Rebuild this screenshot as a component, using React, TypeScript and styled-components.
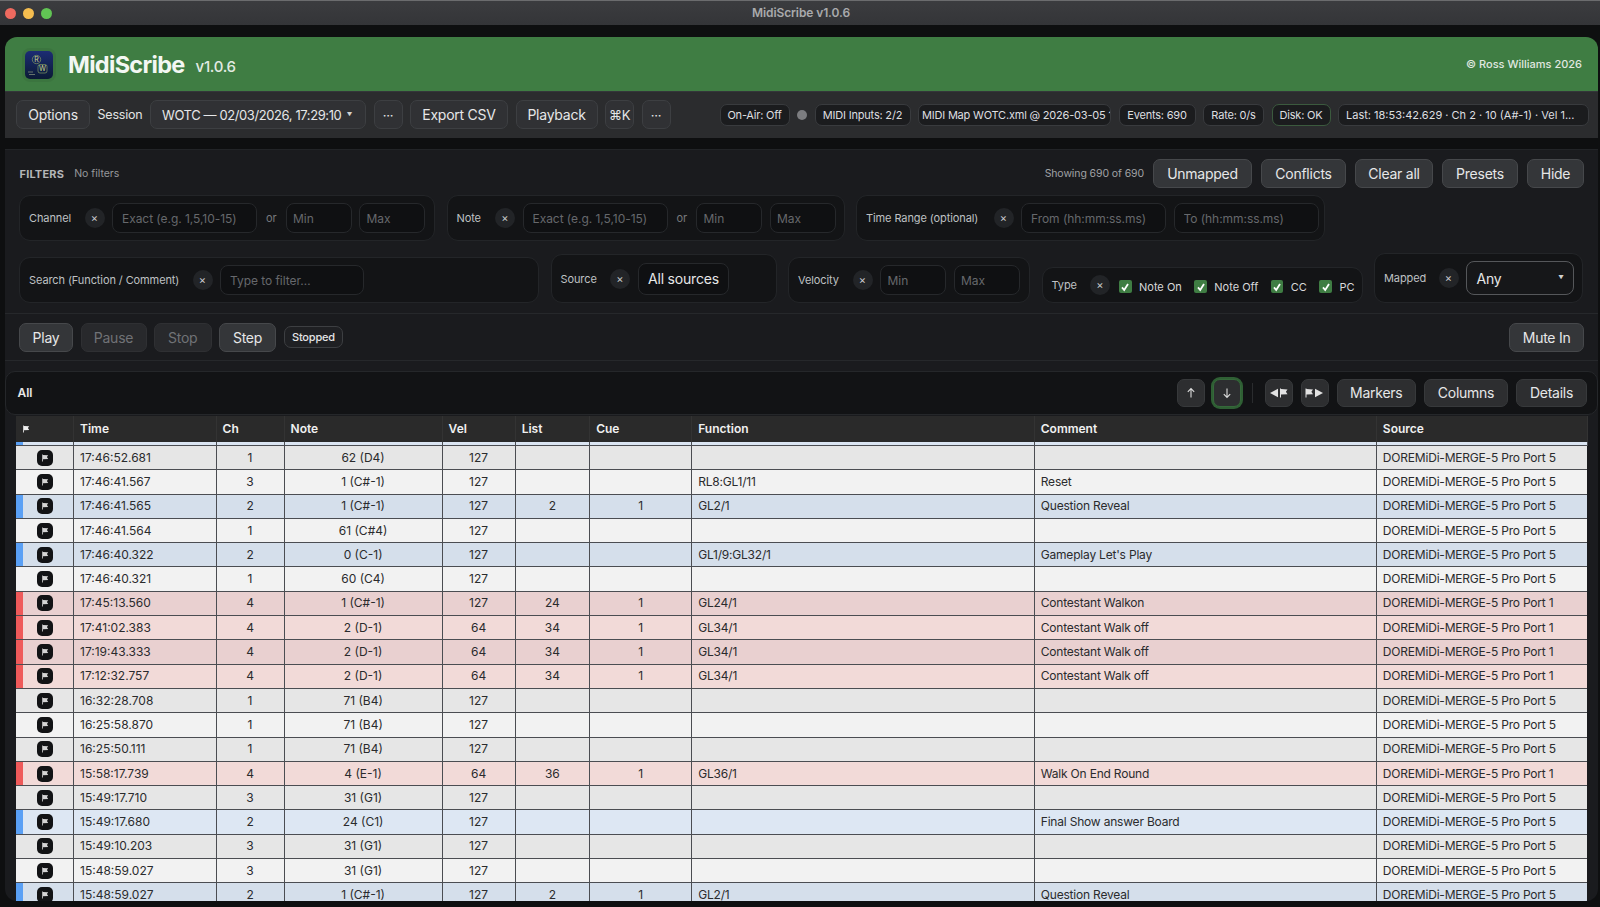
import styled, { createGlobalStyle } from 'styled-components'

const GlobalStyle = createGlobalStyle`
  html, body {
    margin: 0;
    height: 100%;
    background: #0e0f10;
    overflow: hidden;
    font-family: Inter, "Liberation Sans", sans-serif;
  }
  * { box-sizing: border-box; }
`

const Page = styled.div`
  width: 1600px;
  height: 907px;
  display: flex;
  flex-direction: column;
  overflow: hidden;
`

const TitleBar = styled.header`
  height: 25px;
  flex: none;
  display: grid;
  grid-template-columns: 1fr auto 1fr;
  align-items: center;
  padding: 0 5px;
  background: linear-gradient(#3b3c3f, #343538);
  border-top: 1px solid #6b6c6e;
`

const Lights = styled.div`
  display: flex;
  gap: 7px;
`

const Light = styled.span<{ $color: string }>`
  width: 11px;
  height: 11px;
  border-radius: 50%;
  background: ${({ $color }) => $color};
`

const WindowTitle = styled.div`
  padding: 0 0 2px 2px;
  font-size: 12px;
  font-weight: 600;
  color: #a9aaac;
  letter-spacing: -0.1px;
`

const Shell = styled.div`
  flex: 1;
  min-height: 0;
  margin: 12px 2px 6px 4.5px;
  display: flex;
  flex-direction: column;
  border-radius: 12px;
  overflow: hidden;
`

const Brand = styled.div`
  height: 54px;
  flex: none;
  display: flex;
  align-items: center;
  padding: 0 16px 0 17.5px;
  background: #3f7d43;
`

const LogoPlate = styled.div`
  width: 34px;
  height: 34px;
  margin-right: 12px;
  padding: 3px;
  margin-top: 2px;
  border-radius: 8px;
  background: rgba(0, 0, 0, 0.06);
`

const AppName = styled.h1`
  margin: 0;
  font-size: 23.5px;
  font-weight: 700;
  letter-spacing: -0.7px;
  color: #f3f7f3;
`

const Version = styled.span`
  margin-left: 11px;
  margin-top: 4px;
  font-size: 15px;
  font-weight: 500;
  letter-spacing: -0.3px;
  color: #e3ebe3;
`

const Copyright = styled.span`
  margin-left: auto;
  font-size: 11px;
  font-weight: 500;
  color: #e0e8e0;
`

const Toolbar = styled.div`
  height: 47px;
  flex: none;
  display: flex;
  align-items: center;
  padding: 0 9.5px 0 11.5px;
  background: #2b2c2e;
  box-shadow: inset 0 1px 0 #34363a;
`

const Button = styled.button<{ $tone?: 'bar' | 'off'; $width?: number }>`
  flex: none;
  height: 29px;
  ${({ $width }) => ($width ? `width: ${$width}px;` : '')}
  padding: 0 ${({ $width }) => ($width ? 0 : 12.5)}px;
  border-radius: 7px;
  font-family: inherit;
  font-size: 14px;
  letter-spacing: -0.25px;
  color: ${({ $tone }) => ($tone === 'off' ? '#707276' : '#e6e7e8')};
  background: ${({ $tone }) =>
    $tone === 'bar' ? '#303134' : $tone === 'off' ? '#28292c' : '#343639'};
  border: 1px solid
    ${({ $tone }) => ($tone === 'bar' ? '#3d3f42' : $tone === 'off' ? '#2f3033' : '#46484b')};
`

const ToolGroup = styled.div`
  display: flex;
  align-items: center;
  gap: 7.5px;
`

const SessionLabel = styled.span`
  font-size: 12.5px;
  letter-spacing: -0.2px;
  color: #e2e3e4;
`

const SessionSelect = styled(Button)`
  width: 216px;
  padding: 0 13px 0 11px;
  display: flex;
  align-items: center;
  justify-content: space-between;
  font-size: 13px;
  letter-spacing: -0.4px;
`

const Caret = styled.span`
  font-size: 5.5px;
  color: #d0d0d0;
`

const SquareButton = styled(Button)`
  width: 29px;
  padding: 0;
  font-size: 13px;
`

const StatusGroup = styled.div`
  margin-left: auto;
  display: flex;
  align-items: center;
  gap: 7.5px;
`

const Pill = styled.span<{ $width: number; $ok?: boolean }>`
  flex: none;
  width: ${({ $width }) => $width}px;
  height: 22px;
  padding: 0 7px;
  display: inline-flex;
  align-items: center;
  justify-content: center;
  overflow: hidden;
  white-space: nowrap;
  font-size: 11px;
  letter-spacing: -0.2px;
  color: #dedfe0;
  background: #1b1c1e;
  border: 1px solid ${({ $ok }) => ($ok ? '#3b5a3e' : '#393b3e')};
  border-radius: 7px;
`

const ClipPill = styled(Pill)`
  justify-content: flex-start;
  padding: 0 3px;
`

const LastPill = styled(Pill)`
  justify-content: flex-start;
  letter-spacing: 0;
`

const Dot = styled.span`
  width: 10px;
  height: 10px;
  border-radius: 50%;
  background: #7c7d80;
`

const Content = styled.div`
  flex: 1;
  min-height: 0;
  margin-top: 11px;
  display: flex;
  flex-direction: column;
  background: #1a1b1e;
  border-top: 1px solid #222427;
`

const Filters = styled.section`
  flex: none;
  padding: 9px 14px 10px 14.5px;
  display: flex;
  flex-direction: column;
  gap: 7px;
  border-bottom: 1px solid #26282b;
`

const FilterHead = styled.div`
  height: 29px;
  display: flex;
  align-items: center;
  gap: 9px;
`

const FilterTitle = styled.strong`
  padding-left: 0.5px;
  font-size: 11px;
  font-weight: 700;
  letter-spacing: 0.2px;
  color: #b4b6b8;
`

const FilterNote = styled.span`
  margin-left: 1px;
  font-size: 10.5px;
  color: #96989b;
`

const Showing = styled.span`
  margin-left: auto;
  font-size: 10.5px;
  letter-spacing: -0.1px;
  color: #a0a2a5;
`

const FilterStack = styled.div`
  display: flex;
  flex-direction: column;
  gap: 12px;
`

const FilterRow = styled.div`
  display: flex;
  align-items: flex-end;
  gap: 11.5px;
`

const Group = styled.div<{ $width: number; $height?: number }>`
  flex: none;
  width: ${({ $width }) => $width}px;
  height: ${({ $height }) => $height ?? 46}px;
  padding: 0 9px;
  display: flex;
  align-items: center;
  gap: 7.5px;
  background: #131416;
  border: 1px solid #232528;
  border-radius: 11px;
`

const GroupLabel = styled.span<{ $width: number }>`
  flex: none;
  width: ${({ $width }) => $width}px;
  white-space: nowrap;
  font-size: 11px;
  letter-spacing: -0.1px;
  color: #bfc1c3;
`

const ClearChip = styled.span`
  flex: none;
  width: 20px;
  height: 20px;
  display: flex;
  align-items: center;
  justify-content: center;
  border-radius: 50%;
  font-size: 11px;
  color: #c8c9cb;
  background: #222427;
`

const TextInput = styled.input<{ $width: number; $narrow?: boolean }>`
  flex: none;
  width: ${({ $width }) => $width}px;
  height: 30px;
  padding: 0 ${({ $narrow }) => ($narrow ? 6.5 : 9)}px;
  font-family: inherit;
  font-size: 12px;
  letter-spacing: -0.05px;
  color: #ddd;
  background: #0f1012;
  border: 1px solid #26282b;
  border-radius: 8px;
  outline: none;
  &::placeholder {
    color: #66686c;
  }
`

const OrLabel = styled.span`
  flex: none;
  width: 13.5px;
  text-align: center;
  font-size: 11px;
  color: #77797c;
`

const SelectBox = styled.div<{ $width: number; $height: number; $strong?: boolean }>`
  flex: none;
  width: ${({ $width }) => $width}px;
  height: ${({ $height }) => $height}px;
  padding: 0 9.5px;
  display: flex;
  align-items: center;
  justify-content: space-between;
  white-space: nowrap;
  font-size: 14px;
  letter-spacing: -0.2px;
  color: #e6e7e8;
  background: ${({ $strong }) => ($strong ? '#161719' : '#0f1012')};
  border: 1px solid ${({ $strong }) => ($strong ? '#55575a' : '#26282b')};
  border-radius: 8px;
`

const CheckList = styled.div`
  margin-left: 1.5px;
  margin-top: 3px;
  display: flex;
  gap: 12.5px;
`

const CheckItem = styled.label`
  display: inline-flex;
  align-items: center;
  gap: 7.5px;
  white-space: nowrap;
  font-size: 11px;
  color: #d8d9da;
`

const CheckBox = styled.span`
  width: 12.5px;
  height: 13px;
  display: flex;
  align-items: center;
  justify-content: center;
  border-radius: 2px;
  background: #3f7d43;
`

const Transport = styled.div`
  flex: none;
  height: 47px;
  padding: 0 14px 0 14.5px;
  display: flex;
  align-items: center;
  gap: 7.5px;
  border-bottom: 1px solid #26282b;
`

const StatePill = styled.span`
  height: 22px;
  padding: 0 7.5px;
  display: inline-flex;
  align-items: center;
  font-size: 11px;
  font-weight: 500;
  letter-spacing: -0.2px;
  color: #e4e5e6;
  background: #1f2023;
  border: 1px solid #3d3f42;
  border-radius: 7px;
`

const PushRight = styled(Button)`
  margin-left: auto;
`

const EventsPanel = styled.section`
  flex: 1;
  min-height: 0;
  margin-top: 9.5px;
  display: flex;
  flex-direction: column;
`

const EventsBar = styled.div`
  flex: none;
  height: 44px;
  padding: 0 10px 0 12px;
  display: flex;
  align-items: center;
  gap: 8px;
  background: #121315;
  border: 1px solid #25272a;
  border-radius: 10px;
`

const BarTitle = styled.strong`
  margin-right: auto;
  font-size: 12px;
  font-weight: 600;
  color: #e8e8e8;
`

const BarButton = styled(Button)`
  height: 28px;
  font-size: 14px;
  background: #2d2e30;
  border-color: #37393b;
`

const BarIcon = styled(BarButton)<{ $active?: boolean }>`
  width: 28px;
  padding: 0;
  display: flex;
  align-items: center;
  justify-content: center;
  ${({ $active }) => $active && 'border-color: #35693a; box-shadow: 0 0 0 2px #2f5f34;'}
`

const BarDivider = styled.span`
  width: 1px;
  height: 20px;
  margin: 0 3.5px;
  background: #2a2c2e;
`

const TableWrap = styled.div`
  flex: 1;
  min-height: 0;
  margin: 1px 10.5px 0 11.5px;
  overflow: hidden;
`

const EventTable = styled.table`
  width: 100%;
  table-layout: fixed;
  border-collapse: collapse;
  font-size: 12px;
  color: #2a2b2d;
`

const HeadCell = styled.th`
  height: 26px;
  padding: 0 6px;
  text-align: left;
  font-size: 12px;
  font-weight: 600;
  color: #f0f0f0;
  background: #2a2a2a;
  border-right: 1px solid #333;
`

type Kind = 'plain' | 'blue' | 'red'

const rowColors: Record<Kind, [string, string]> = {
  plain: ['#e6e6e6', '#f2f2f2'],
  blue: ['#d5dfeb', '#dde7f3'],
  red: ['#e9d0d0', '#f2dad8'],
}

const accents: Record<Kind, string> = {
  plain: 'transparent',
  blue: '#5aa0f5',
  red: '#ef5a5a',
}

const BodyRow = styled.tr<{ $kind: Kind; $odd: boolean }>`
  height: 24.3px;
  background: ${({ $kind, $odd }) => rowColors[$kind][$odd ? 1 : 0]};
`

const ClippedRow = styled.tr`
  height: 4px;
  background: #dbe5f2;
`

const Cell = styled.td<{ $center?: boolean; $tight?: boolean }>`
  padding: 0 6px 1px;
  white-space: nowrap;
  overflow: hidden;
  text-align: ${({ $center }) => ($center ? 'center' : 'left')};
  letter-spacing: ${({ $tight }) => ($tight ? '-0.2px' : '0')};
  border: 1px solid #4b4d52;
  &:first-child {
    border-left: 0;
  }
  &:last-child {
    border-right: 0;
  }
`

const FlagCell = styled(Cell)<{ $accent: string }>`
  padding: 0;
  box-shadow: inset 7px 0 0 ${({ $accent }) => $accent};
`

const ClippedCell = styled.td<{ $accent?: boolean }>`
  padding: 0;
  border-right: 1px solid #4b4d52;
  border-bottom: 1px solid #4b4d52;
  ${({ $accent }) => $accent && 'box-shadow: inset 7px 0 0 #5aa0f5;'}
`

const FlagButton = styled.span`
  width: 16px;
  height: 16px;
  margin: 0 auto;
  display: flex;
  align-items: center;
  justify-content: center;
  border-radius: 5px;
  background: #121315;
`

const flagPath = 'M1.5 0.5h1v0.6l6.5 0.4-1.6 2.3 1.6 2.4-6.5 0.3v3h-1z'

const FlagIcon = ({ size = 8, color = '#d4d4d4' }: { size?: number; color?: string }) => (
  <svg width={size} height={size} viewBox="0 0 10 10">
    <path d={flagPath} fill={color} />
  </svg>
)

const columns = [
  { label: '', width: 57.5 },
  { label: 'Time', width: 142.5 },
  { label: 'Ch', width: 68 },
  { label: 'Note', width: 158 },
  { label: 'Vel', width: 73 },
  { label: 'List', width: 74.5 },
  { label: 'Cue', width: 102 },
  { label: 'Function', width: 342.5 },
  { label: 'Comment', width: 342 },
  { label: 'Source', width: 210.5 },
]

type EventRow = [string, number, string, number, string, string, string, string, 1 | 5, Kind]

const events: EventRow[] = [
  ['17:46:52.681', 1, '62 (D4)', 127, '', '', '', '', 5, 'plain'],
  ['17:46:41.567', 3, '1 (C#-1)', 127, '', '', 'RL8:GL1/11', 'Reset', 5, 'plain'],
  ['17:46:41.565', 2, '1 (C#-1)', 127, '2', '1', 'GL2/1', 'Question Reveal', 5, 'blue'],
  ['17:46:41.564', 1, '61 (C#4)', 127, '', '', '', '', 5, 'plain'],
  ['17:46:40.322', 2, '0 (C-1)', 127, '', '', 'GL1/9:GL32/1', "Gameplay Let's Play", 5, 'blue'],
  ['17:46:40.321', 1, '60 (C4)', 127, '', '', '', '', 5, 'plain'],
  ['17:45:13.560', 4, '1 (C#-1)', 127, '24', '1', 'GL24/1', 'Contestant Walkon', 1, 'red'],
  ['17:41:02.383', 4, '2 (D-1)', 64, '34', '1', 'GL34/1', 'Contestant Walk off', 1, 'red'],
  ['17:19:43.333', 4, '2 (D-1)', 64, '34', '1', 'GL34/1', 'Contestant Walk off', 1, 'red'],
  ['17:12:32.757', 4, '2 (D-1)', 64, '34', '1', 'GL34/1', 'Contestant Walk off', 1, 'red'],
  ['16:32:28.708', 1, '71 (B4)', 127, '', '', '', '', 5, 'plain'],
  ['16:25:58.870', 1, '71 (B4)', 127, '', '', '', '', 5, 'plain'],
  ['16:25:50.111', 1, '71 (B4)', 127, '', '', '', '', 5, 'plain'],
  ['15:58:17.739', 4, '4 (E-1)', 64, '36', '1', 'GL36/1', 'Walk On End Round', 1, 'red'],
  ['15:49:17.710', 3, '31 (G1)', 127, '', '', '', '', 5, 'plain'],
  ['15:49:17.680', 2, '24 (C1)', 127, '', '', '', 'Final Show answer Board', 5, 'blue'],
  ['15:49:10.203', 3, '31 (G1)', 127, '', '', '', '', 5, 'plain'],
  ['15:48:59.027', 3, '31 (G1)', 127, '', '', '', '', 5, 'plain'],
  ['15:48:59.027', 2, '1 (C#-1)', 127, '2', '1', 'GL2/1', 'Question Reveal', 5, 'blue'],
]

const Logo = () => (
  <svg width="28" height="28" viewBox="0 0 28 28">
    <defs>
      <linearGradient id="logoFill" x1="0" y1="0" x2="0" y2="1">
        <stop offset="0" stopColor="#1c2c74" />
        <stop offset="1" stopColor="#0b1a35" />
      </linearGradient>
    </defs>
    <rect width="28" height="28" rx="5" fill="url(#logoFill)" />
    <circle cx="11.5" cy="8.5" r="4.2" fill="none" stroke="#7f9a62" strokeWidth="0.7" />
    <text x="11.5" y="11" textAnchor="middle" fontSize="7" fill="#cdd68a" fontFamily="Inter, sans-serif">R</text>
    <rect x="13" y="13.5" width="9" height="8.5" rx="2" fill="none" stroke="#7f9a62" strokeWidth="0.7" />
    <text x="17.5" y="20.4" textAnchor="middle" fontSize="7" fill="#cdd68a" fontFamily="Inter, sans-serif">W</text>
    <path d="M3 21h5M4 23.5h6" stroke="#8c9a80" strokeWidth="0.7" />
  </svg>
)

const Check = () => (
  <svg width="10" height="10" viewBox="0 0 10 10">
    <path d="M2 5.4l2.2 2.6L8 2" fill="none" stroke="#fff" strokeWidth="1.8" />
  </svg>
)

const ArrowIcon = ({ down }: { down?: boolean }) => (
  <svg width="12" height="12" viewBox="0 0 12 12" fill="none" stroke="#dcdcdc" strokeWidth="1.1">
    {down ? <path d="M6 1.5v9M2.8 7.2L6 10.5l3.2-3.3" /> : <path d="M6 10.5v-9M2.8 4.8L6 1.5l3.2 3.3" />}
  </svg>
)

const MarkerJump = ({ next }: { next?: boolean }) => (
  <svg width="19" height="10" viewBox="0 0 19 10" fill="#e2e2e2">
    {next ? (
      <>
        <path d="M0.5 0.5h1v0.6l6.5 0.4-1.6 2.3 1.6 2.4-6.5 0.3v3h-1z" />
        <path d="M10 0.8l8 4.2-8 4.2z" />
      </>
    ) : (
      <>
        <path d="M9 0.8L1 5l8 4.2z" />
        <path d="M11 0.5h1v0.6l6.5 0.4-1.6 2.3 1.6 2.4-6.5 0.3v3h-1z" />
      </>
    )}
  </svg>
)

const Clear = () => <ClearChip>×</ClearChip>

function App() {
  return (
    <Page>
      <GlobalStyle />
      <TitleBar>
        <Lights>
          <Light $color="#ee6a5f" />
          <Light $color="#f5bd4f" />
          <Light $color="#61c454" />
        </Lights>
        <WindowTitle>MidiScribe v1.0.6</WindowTitle>
      </TitleBar>

      <Shell>
        <Brand>
          <LogoPlate>
            <Logo />
          </LogoPlate>
          <AppName>MidiScribe</AppName>
          <Version>v1.0.6</Version>
          <Copyright>© Ross Williams 2026</Copyright>
        </Brand>

        <Toolbar>
          <ToolGroup>
            <Button $tone="bar" $width={74}>Options</Button>
            <SessionLabel>Session</SessionLabel>
            <SessionSelect $tone="bar">
              WOTC — 02/03/2026, 17:29:10 <Caret>▼</Caret>
            </SessionSelect>
            <SquareButton $tone="bar">···</SquareButton>
            <Button $tone="bar" $width={98}>Export CSV</Button>
            <Button $tone="bar" $width={82}>Playback</Button>
            <SquareButton $tone="bar">⌘K</SquareButton>
            <SquareButton $tone="bar">···</SquareButton>
          </ToolGroup>
          <StatusGroup>
            <Pill $width={70}>On-Air: Off</Pill>
            <Dot />
            <Pill $width={96}>MIDI Inputs: 2/2</Pill>
            <ClipPill $width={193}>MIDI Map WOTC.xml @ 2026-03-05 10:22</ClipPill>
            <Pill $width={77}>Events: 690</Pill>
            <Pill $width={61}>Rate: 0/s</Pill>
            <Pill $width={59} $ok>Disk: OK</Pill>
            <LastPill $width={250.5}>Last: 18:53:42.629 · Ch 2 · 10 (A#-1) · Vel 1...</LastPill>
          </StatusGroup>
        </Toolbar>

        <Content>
          <Filters>
            <FilterHead>
              <FilterTitle>FILTERS</FilterTitle>
              <FilterNote>No filters</FilterNote>
              <Showing>Showing 690 of 690</Showing>
              <Button $width={99}>Unmapped</Button>
              <Button $width={85}>Conflicts</Button>
              <Button $width={78}>Clear all</Button>
              <Button $width={76}>Presets</Button>
              <Button $width={57}>Hide</Button>
            </FilterHead>
            <FilterStack>
              <FilterRow>
                <Group $width={416}>
                  <GroupLabel $width={48}>Channel</GroupLabel>
                  <Clear />
                  <TextInput $width={145} placeholder="Exact (e.g. 1,5,10-15)" />
                  <OrLabel>or</OrLabel>
                  <TextInput $width={66} $narrow placeholder="Min" />
                  <TextInput $width={66} $narrow placeholder="Max" />
                </Group>
                <Group $width={398}>
                  <GroupLabel $width={31}>Note</GroupLabel>
                  <Clear />
                  <TextInput $width={145} placeholder="Exact (e.g. 1,5,10-15)" />
                  <OrLabel>or</OrLabel>
                  <TextInput $width={66} $narrow placeholder="Min" />
                  <TextInput $width={66} $narrow placeholder="Max" />
                </Group>
                <Group $width={469}>
                  <GroupLabel $width={120}>Time Range (optional)</GroupLabel>
                  <Clear />
                  <TextInput $width={145} placeholder="From (hh:mm:ss.ms)" />
                  <TextInput $width={145} placeholder="To (hh:mm:ss.ms)" />
                </Group>
              </FilterRow>
              <FilterRow>
                <Group $width={520}>
                  <GroupLabel $width={156}>Search (Function / Comment)</GroupLabel>
                  <Clear />
                  <TextInput $width={144} placeholder="Type to filter…" />
                </Group>
                <Group $width={226} $height={49}>
                  <GroupLabel $width={42}>Source</GroupLabel>
                  <Clear />
                  <SelectBox $width={91} $height={32}>All sources</SelectBox>
                </Group>
                <Group $width={242}>
                  <GroupLabel $width={47}>Velocity</GroupLabel>
                  <Clear />
                  <TextInput $width={66} $narrow placeholder="Min" />
                  <TextInput $width={66} $narrow placeholder="Max" />
                </Group>
                <Group $width={321} $height={36}>
                  <GroupLabel $width={31}>Type</GroupLabel>
                  <Clear />
                  <CheckList>
                    {['Note On', 'Note Off', 'CC', 'PC'].map((name) => (
                      <CheckItem key={name}>
                        <CheckBox>
                          <Check />
                        </CheckBox>
                        {name}
                      </CheckItem>
                    ))}
                  </CheckList>
                </Group>
                <Group $width={209} $height={50}>
                  <GroupLabel $width={47}>Mapped</GroupLabel>
                  <Clear />
                  <SelectBox $width={108} $height={34} $strong>
                    Any <Caret>▼</Caret>
                  </SelectBox>
                </Group>
              </FilterRow>
            </FilterStack>
          </Filters>

          <Transport>
            <Button $width={54}>Play</Button>
            <Button $tone="off" $width={66}>Pause</Button>
            <Button $tone="off" $width={57.5}>Stop</Button>
            <Button $width={57}>Step</Button>
            <StatePill>Stopped</StatePill>
            <PushRight>Mute In</PushRight>
          </Transport>

          <EventsPanel>
            <EventsBar>
              <BarTitle>All</BarTitle>
              <BarIcon><ArrowIcon /></BarIcon>
              <BarIcon $active><ArrowIcon down /></BarIcon>
              <BarDivider />
              <BarIcon><MarkerJump /></BarIcon>
              <BarIcon><MarkerJump next /></BarIcon>
              <BarButton $width={79.5}>Markers</BarButton>
              <BarButton $width={84}>Columns</BarButton>
              <BarButton $width={71}>Details</BarButton>
            </EventsBar>
            <TableWrap>
              <EventTable>
                <colgroup>
                  {columns.map((column) => (
                    <col key={column.label} style={{ width: column.width }} />
                  ))}
                </colgroup>
                <thead>
                  <tr>
                    {columns.map((column) => (
                      <HeadCell key={column.label}>
                        {column.label || <FlagIcon color="#f0f0f0" />}
                      </HeadCell>
                    ))}
                  </tr>
                </thead>
                <tbody>
                  <ClippedRow>
                    {columns.map((column, i) => (
                      <ClippedCell key={column.label} $accent={i === 0} />
                    ))}
                  </ClippedRow>
                  {events.map(([time, ch, note, vel, list, cue, fn, comment, port, kind], i) => (
                    <BodyRow key={time + ch} $kind={kind} $odd={i % 2 === 1}>
                      <FlagCell $accent={accents[kind]}>
                        <FlagButton>
                          <FlagIcon />
                        </FlagButton>
                      </FlagCell>
                      <Cell>{time}</Cell>
                      <Cell $center>{ch}</Cell>
                      <Cell $center>{note}</Cell>
                      <Cell $center>{vel}</Cell>
                      <Cell $center>{list}</Cell>
                      <Cell $center>{cue}</Cell>
                      <Cell $tight>{fn}</Cell>
                      <Cell $tight>{comment}</Cell>
                      <Cell $tight>DOREMiDi-MERGE-5 Pro Port {port}</Cell>
                    </BodyRow>
                  ))}
                </tbody>
              </EventTable>
            </TableWrap>
          </EventsPanel>
        </Content>
      </Shell>
    </Page>
  )
}

export default App
